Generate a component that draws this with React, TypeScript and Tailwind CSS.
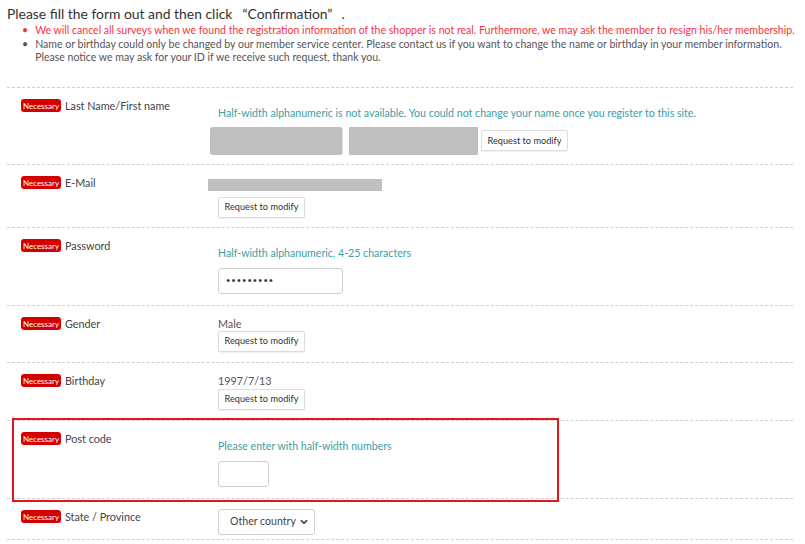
import React from "react";

function Badge() {
  return (
    <span className="inline-flex h-[13px] w-[40px] shrink-0 items-center justify-center rounded-[3px] bg-[#d40000] text-[8px] leading-none text-white">
      Necessary
    </span>
  );
}

function ModifyButton() {
  return (
    <button className="block h-[21px] w-[87px] rounded-[2px] border border-[#dcdcdc] bg-white text-[9.2px] leading-none text-[#333] shadow-[0_1px_1px_rgba(0,0,0,0.06)]">
      Request to modify
    </button>
  );
}

function Row({
  label,
  children,
  className = "",
}: {
  label: string;
  children: React.ReactNode;
  className?: string;
}) {
  return (
    <div className={"flex border-b border-dashed border-[#cfcfcf] pt-[11px] " + className}>
      <div className="flex h-[14px] w-[201px] shrink-0 items-center gap-[4px] pl-[14px]">
        <Badge />
        <span className="text-[10.8px] leading-[14px] text-[#444]">{label}</span>
      </div>
      <div className="flex min-w-0 flex-1 flex-col items-start">{children}</div>
    </div>
  );
}

function Hint({ children }: { children: React.ReactNode }) {
  return (
    <div className="ml-[10px] mt-[7px] h-[14px] whitespace-nowrap text-[10.6px] leading-[14px] text-[#3c9ea6]">
      {children}
    </div>
  );
}

export default function App() {
  return (
    <div className="h-[544px] w-[805px] overflow-hidden bg-white font-['Lato',sans-serif]">
      <div className="pl-[7px] pt-[5px]">
        <h1 className="text-[13.9px] leading-[18px] text-[#333]">
          Please fill the form out and then click<span className="ml-[10px]">“</span>Confirmation”
          <span className="ml-[9px]">.</span>
        </h1>
        <ul className="mt-[1px] pl-[15px] text-[10.55px] leading-[13.5px]">
          <li className="flex gap-[7px] whitespace-nowrap text-[#f5333f]">
            <span>•</span>
            <span>
              We will cancel all surveys when we found the registration information of the shopper is
              not real. Furthermore, we may ask the member to resign his/her membership.
            </span>
          </li>
          <li className="flex gap-[7px] whitespace-nowrap text-[#555]">
            <span>•</span>
            <span>
              Name or birthday could only be changed by our member service center. Please contact us if
              you want to change the name or birthday in your member information.
              <br />
              Please notice we may ask for your ID if we receive such request, thank you.
            </span>
          </li>
        </ul>
      </div>

      <div className="ml-[7px] mt-[22px] w-[786px] border-t border-dashed border-[#cfcfcf]">
        <Row label="Last Name/First name" className="pb-[9px]">
          <Hint>
            Half-width alphanumeric is not available. You could not change your name once you
            register to this site.
          </Hint>
          <div className="ml-[2px] mt-[7px] flex items-center">
            <div className="h-[28px] w-[133px] rounded-[3px] border-r border-[#ddd] bg-[#bfbfbf]" />
            <div className="ml-[6px] h-[28px] w-[129px] bg-[#bfbfbf]" />
            <div className="ml-[3px]">
              <ModifyButton />
            </div>
          </div>
        </Row>

        <Row label="E-Mail" className="pb-[9px]">
          <div className="mt-[3px] h-[12px] w-[174px] bg-[#c0c0c0]" />
          <div className="ml-[10px] mt-[6px]">
            <ModifyButton />
          </div>
        </Row>

        <Row label="Password" className="pb-[11px]">
          <Hint>Half-width alphanumeric, 4-25 characters</Hint>
          <input
            type="password"
            defaultValue="123456789"
            className="ml-[10px] mt-[8px] block h-[26px] w-[125px] rounded-[3px] border border-[#cfcfcf] px-[7px] text-[7.5px] tracking-[1px] text-[#333] outline-none"
          />
        </Row>

        <Row label="Gender" className="pb-[10px]">
          <div className="ml-[10px] h-[14px] text-[10.8px] leading-[14px] text-[#555]">Male</div>
          <div className="ml-[10px]">
            <ModifyButton />
          </div>
        </Row>

        <Row label="Birthday" className="pb-[10px]">
          <div className="ml-[10px] h-[14px] text-[10.8px] leading-[14px] text-[#555]">1997/7/13</div>
          <div className="ml-[10px] mt-[1px]">
            <ModifyButton />
          </div>
        </Row>

        <div className="relative">
          <Row label="Post code" className="pb-[11px]">
            <Hint>Please enter with half-width numbers</Hint>
            <input
              type="text"
              className="ml-[10px] mt-[8px] block h-[26px] w-[51px] rounded-[3px] border border-[#cfcfcf] outline-none"
            />
          </Row>
          <span className="pointer-events-none absolute left-[5px] top-[-3px] h-[84px] w-[547px] border-2 border-[#e8141c]" />
        </div>

        <Row label="State / Province" className="pb-[4px]">
          <div className="relative ml-[10px] mt-[-1px]">
            <select className="block h-[26px] w-[97px] appearance-none rounded-[3px] border border-[#cfcfcf] bg-white pl-[11px] text-[10.6px] text-[#444] outline-none">
              <option>Other country</option>
            </select>
            <svg
              className="pointer-events-none absolute right-[7px] top-[10px]"
              width="8"
              height="6"
              viewBox="0 0 8 6"
            >
              <path d="M1 1.2 L4 4.2 L7 1.2" fill="none" stroke="#333" strokeWidth="1.6" />
            </svg>
          </div>
        </Row>
      </div>
    </div>
  );
}
